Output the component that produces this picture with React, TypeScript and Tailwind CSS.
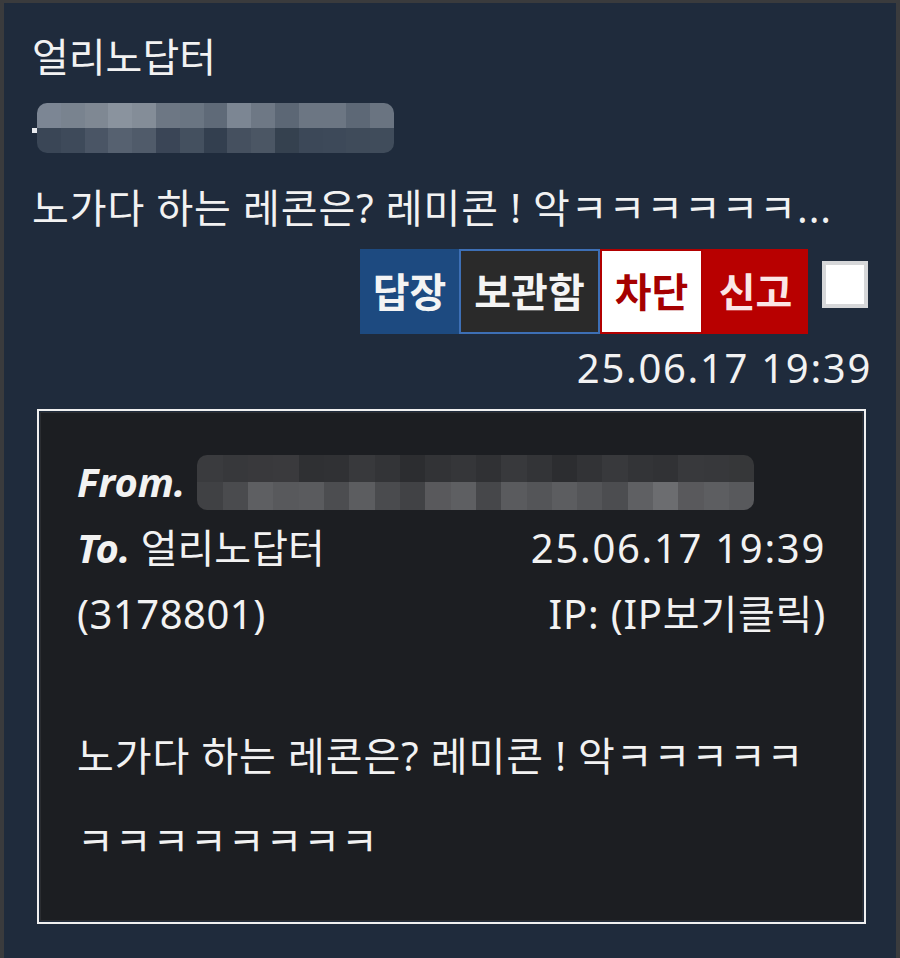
import React from 'react';

const font = { fontFamily: '"Noto Sans", "Noto Sans CJK KR", sans-serif' };

// mosaic blur used to hide the user id
const Mosaic: React.FC<{ top: string[]; bottom: string[]; className?: string }> = ({ top, bottom, className }) => (
    <div className={`flex flex-col overflow-hidden ${className ?? ''}`}>
        <div className="flex flex-1">
            {top.map((c, i) => (
                <div key={i} className="flex-1" style={{ backgroundColor: c }} />
            ))}
        </div>
        <div className="flex flex-1">
            {bottom.map((c, i) => (
                <div key={i} className="flex-1" style={{ backgroundColor: c }} />
            ))}
        </div>
    </div>
);

const nickTop = ['#7c8694', '#79838f', '#7f8893', '#8a939e', '#848d98', '#6d7784', '#6a7582', '#5f6a78', '#7c8693', '#6e7885', '#5c6775', '#6c7683', '#6c7683', '#5d6876', '#6a7481'];
const nickBottom = ['#3a4656', '#3e4a5a', '#4a5565', '#566170', '#505b6a', '#3a4556', '#44505f', '#333f4f', '#45505f', '#4b5664', '#35414f', '#3c4858', '#3d4959', '#3f4b5a', '#404c5b'];

const fromTop = ['#3a3b3e', '#37383b', '#39393c', '#3a3a3d', '#2f3033', '#303134', '#38393c', '#333437', '#2c2d30', '#323336', '#353639', '#303134', '#38393c', '#333437', '#2c2d30', '#323336', '#38393c', '#333437', '#313235', '#38393c', '#37383b', '#363739'];
const fromBottom = ['#404144', '#4a4b4e', '#5e5f62', '#58595c', '#5a5b5e', '#4c4d50', '#5c5d60', '#4a4b4e', '#414245', '#59595c', '#5e5f62', '#46474a', '#5a5b5e', '#545558', '#5c5d60', '#545558', '#4c4d50', '#5f6063', '#6c6d70', '#59595c', '#5d5e61', '#58595c'];

export default function App() {
    return (
        <div
            className="w-[900px] h-[958px] bg-[#1f2b3c] border-l-4 border-t-[3px] border-r-4 border-[#3a3b3d] text-[#f2f2f2] overflow-hidden"
            style={font}
        >
            <div className="pl-[28px] pr-[24px] pt-[27px]">
                <div className="text-[40px] leading-[54px]">얼리노답터</div>

                <div className="relative mt-[19px] h-[50px] w-[362px]">
                    <div className="absolute left-0 top-[25px] w-[14px] h-[5px] bg-[#e8eaee]" />
                    <Mosaic top={nickTop} bottom={nickBottom} className="absolute left-[5px] top-0 w-[357px] h-[50px] rounded-[10px]" />
                </div>

                <div className="mt-[28px] text-[40px] leading-[54px] tracking-[0.9px] whitespace-nowrap">
                    노가다 하는 레콘은? 레미콘 ! 악ㅋㅋㅋㅋㅋㅋ...
                </div>

                {/* actions */}
                <div className="mt-[14px] mr-[4px] flex justify-end items-start">
                    <div className="flex h-[85px] text-[40px] font-bold">
                        <button className="w-[99px] bg-[#1d4a80] text-[#f4f4f4] flex items-center justify-center">답장</button>
                        <button className="w-[141px] bg-[#2a2a2a] border-2 border-[#3d6fb5] text-[#f4f4f4] flex items-center justify-center">보관함</button>
                        <button className="w-[103px] bg-white border-2 border-[#b20000] text-[#a50000] flex items-center justify-center">차단</button>
                        <button className="w-[105px] bg-[#b80000] text-[#fbe6e6] flex items-center justify-center">신고</button>
                    </div>
                    <div className="ml-[14px] mt-[12px] w-[46px] h-[47px] bg-white border-[4px] border-[#d6d7d9]" />
                </div>

                <div className="mt-[7px] text-right text-[40px] leading-[54px] tracking-[1.7px]">25.06.17 19:39</div>

                {/* message detail */}
                <div className="mt-[14px] ml-[5px] mr-[6px] border-2 border-[#f0f0f0] p-[1px]">
                    <div className="bg-[#1c1e22] border border-[#2b2d31] h-[509px] px-[36px] pt-[36px] text-[40px]">
                        <div className="flex items-center h-[66px]">
                            <span className="italic font-bold">From.</span>
                            <Mosaic top={fromTop} bottom={fromBottom} className="ml-[12px] w-[557px] h-[55px] rounded-[10px]" />
                        </div>
                        <div className="flex justify-between h-[66px] items-center">
                            <span>
                                <span className="italic font-bold">To.</span> 얼리노답터
                            </span>
                            <span className="tracking-[1.7px]">25.06.17 19:39</span>
                        </div>
                        <div className="flex justify-between h-[66px] items-center">
                            <span className="tracking-[0.5px]">(3178801)</span>
                            <span className="tracking-[0.8px]">IP: (IP보기클릭)</span>
                        </div>
                        <div className="mt-[82px] leading-[54px] tracking-[0.9px] whitespace-nowrap">노가다 하는 레콘은? 레미콘 ! 악ㅋㅋㅋㅋㅋ</div>
                        <div className="mt-[31px] leading-[54px] tracking-[0.9px]">ㅋㅋㅋㅋㅋㅋㅋㅋ</div>
                    </div>
                </div>
            </div>
        </div>
    );
}
